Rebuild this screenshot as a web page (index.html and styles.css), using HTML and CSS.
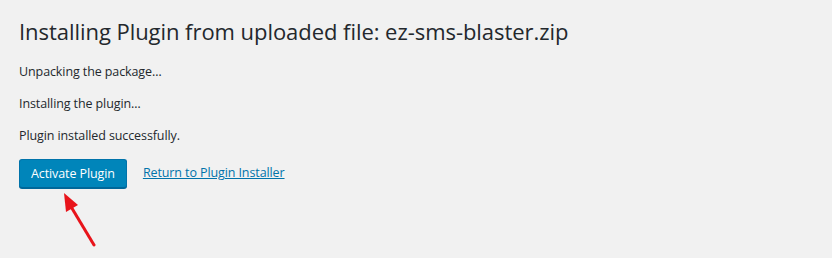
FILE: index.html
```html
<!DOCTYPE html>
<html>
<head>
<meta charset="utf-8">
<link rel="stylesheet" href="styles.css">
</head>
<body>
<div class="wrap">
  <h1 class="title">Installing Plugin from uploaded file: ez-sms-blaster.zip</h1>
  <p class="msg">Unpacking the package…</p>
  <p class="msg">Installing the plugin…</p>
  <p class="msg">Plugin installed successfully.</p>
  <div class="actions">
    <a class="button-primary" href="#">Activate Plugin</a>
    <a class="link" href="#">Return to Plugin Installer</a>
  </div>
</div>
<svg class="arrow" width="60" height="70" viewBox="0 0 60 70">
  <line x1="44" y1="60" x2="20" y2="20" stroke="#e8141b" stroke-width="3" stroke-linecap="round"/>
  <polygon points="14,8 28,20 16,27" fill="#e8141b"/>
</svg>
</body>
</html>
```
FILE: styles.css
```css
html, body {
  margin: 0;
  padding: 0;
  background: #f1f1f1;
}
body {
  font-family: "Open Sans", "Noto Sans", sans-serif;
  color: #23282d;
  font-size: 13px;
  line-height: 1.5;
  position: relative;
  height: 258px;
  overflow: hidden;
}
.wrap {
  padding: 17px 0 0 19px;
}
.title {
  font-size: 22px;
  font-weight: 400;
  line-height: 1.3;
  margin: 0 0 17px;
  letter-spacing: -0.05px;
}
.msg {
  margin: 0 0 13.5px;
  font-size: 12.5px;
  letter-spacing: -0.1px;
}
.actions {
  display: flex;
  align-items: center;
  gap: 16px;
  margin-top: 5px;
}
.button-primary {
  display: inline-block;
  box-sizing: border-box;
  height: 29px;
  line-height: 27px;
  padding: 0 11px;
  background: #0085ba;
  border: 1px solid #0073aa;
  border-bottom-color: #006799;
  border-radius: 3px;
  box-shadow: 0 1px 0 #006799;
  color: #fff;
  text-decoration: none;
  font-size: 12.5px;
  letter-spacing: -0.1px;
}
.link {
  color: #0073aa;
  text-decoration: underline;
  font-size: 12.5px;
  letter-spacing: -0.1px;
}
.arrow {
  position: absolute;
  left: 50px;
  top: 185px;
}
```
